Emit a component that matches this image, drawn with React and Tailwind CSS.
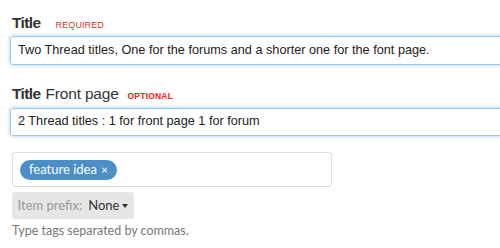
import { useState } from "react";

export default function App() {
  const [title, setTitle] = useState(
    "Two Thread titles, One for the forums and a shorter one for the font page."
  );
  const [frontTitle, setFrontTitle] = useState("2 Thread titles : 1 for front page 1 for forum");

  return (
    <div className="w-[500px] h-[248px] overflow-hidden bg-white pl-[10px] pt-[11px] font-['Liberation_Sans',Arial,sans-serif]">
      {/* Title */}
      <div className="flex items-baseline h-[20px] pl-[2px]">
        <span className="text-[15.5px] font-bold text-[#333] tracking-[-0.6px]">Title</span>
        <span className="ml-[15px] text-[9px] text-[#d33] tracking-[0.1px]">REQUIRED</span>
      </div>
      <div className="mt-[5px] w-[520px] h-[29px] border border-[#9ecaed] rounded-[3px] shadow-[0_0_4px_#9ecaed] flex items-center">
        <input
          value={title}
          onChange={(e) => setTitle(e.target.value)}
          className="w-full outline-none px-[7px] text-[12.7px] text-[#222] bg-transparent"
        />
      </div>

      {/* Title front page */}
      <div className="flex items-baseline h-[20px] mt-[17px] pl-[2px]">
        <span className="text-[15.5px] font-bold text-[#333] tracking-[-0.6px]">Title</span>
        <span className="ml-[5px] text-[15.5px] text-[#333] tracking-[-0.2px]">Front page</span>
        <span className="ml-[9px] text-[8.5px] font-bold text-[#e22] tracking-[0.2px]">OPTIONAL</span>
      </div>
      <div className="mt-[6px] w-[520px] h-[28px] border border-[#9ecaed] rounded-[3px] shadow-[0_0_4px_#9ecaed] flex items-center">
        <input
          value={frontTitle}
          onChange={(e) => setFrontTitle(e.target.value)}
          className="w-full outline-none px-[7px] text-[12.7px] text-[#222] bg-transparent"
        />
      </div>

      {/* Tags */}
      <div className="font-['Lato',sans-serif] pl-[2px]">
        <div className="mt-[16px] w-[320px] h-[35px] border border-[#ddd] rounded-[3px] flex items-center px-[7px]">
          <span className="h-[20px] px-[9px] rounded-full bg-[#4b8ec8] text-white text-[13px] flex items-center">
            feature idea <span className="ml-[4px] text-[12px]">×</span>
          </span>
        </div>
        <button className="mt-[5px] h-[27px] w-[122px] bg-[#e6e6e6] rounded-[3px] flex items-center justify-center text-[13px]">
          <span className="text-[#999]">Item prefix:</span>
          <span className="ml-[6px] text-[#333]">None</span>
          <span className="ml-[3px] w-0 h-0 border-l-[3.5px] border-r-[3.5px] border-t-[4px] border-l-transparent border-r-transparent border-t-[#333]"></span>
        </button>
        <div className="mt-[3px] text-[12.5px] text-[#777]">Type tags separated by commas.</div>
      </div>
    </div>
  );
}
